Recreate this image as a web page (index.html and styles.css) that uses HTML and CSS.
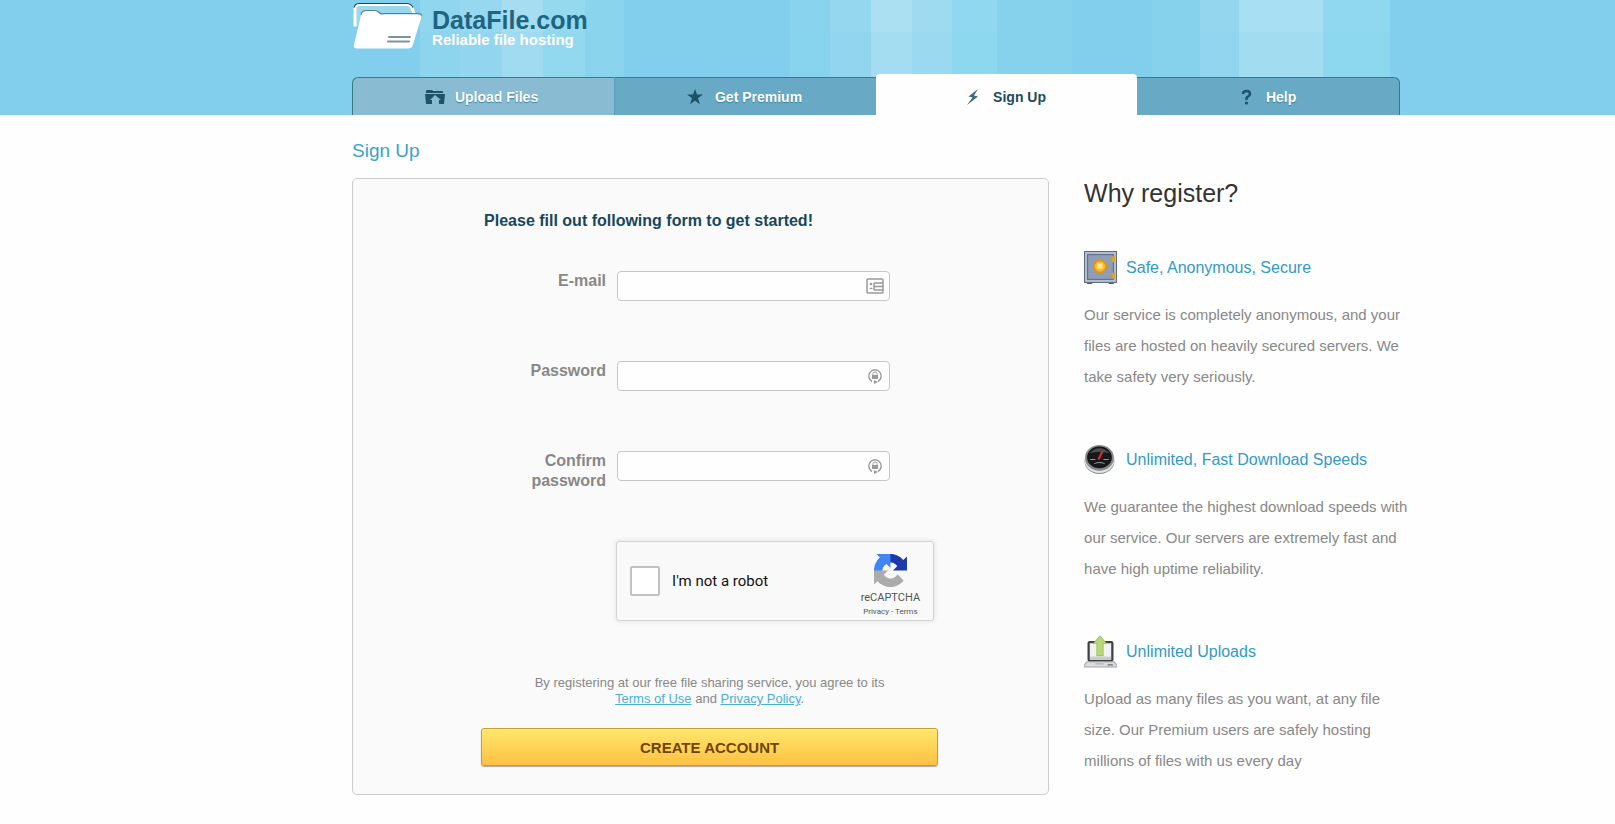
FILE: index.html
```html
<!DOCTYPE html>
<html lang="en">
<head>
<meta charset="utf-8">
<title>DataFile.com - Sign Up</title>
<link rel="stylesheet" href="styles.css">
</head>
<body>
<header class="header">
  <div class="wrap header-inner">
    <a class="logo" href="#">
      <svg class="logo-icon" viewBox="0 0 72 48" aria-hidden="true">
        <path d="M3 26V8q0-4 4-4h48q4 0 5 4l2 5" fill="#9bd8ee" stroke="#fff" stroke-width="3"/>
        <path d="M2 7q1-4 5-4h48q4 0 6 4" fill="none" stroke="#20485a" stroke-width="1.200"/>
        <path d="M9 15q1-5 5-5h9q2 0 4 2t5 2h34q4 0 3 4l-8 26q-1 4-5 4H5q-4 0-3-4z" fill="#fff"/>
        <path d="M9 14q1-4 5-4h9q2 0 4 2t5 1h34q3 0 4 2" fill="none" stroke="#5c7f8d" stroke-width="1.200"/>
        <path d="M37 36.500h21M36 41h21" stroke="#7c949e" stroke-width="2" stroke-linecap="round"/>
      </svg>
      <span class="logo-text">
        <span class="logo-name">DataFile.com</span>
        <span class="logo-tag">Reliable file hosting</span>
      </span>
    </a>
    <nav class="tabs">
      <a class="tab tab-first" href="#">
        <svg class="tab-icon" viewBox="0 0 20 16" aria-hidden="true"><path fill="#1c536a" d="M1 2q0-1 1-1h5l1 1h9q1 0 1 1v1H1zM0 5h20l-1 10h-5v-4h2l-6-5-5 5h2v4H1z"/></svg>
        Upload Files</a>
      <a class="tab" href="#">
        <svg class="tab-icon" viewBox="0 0 20 16" aria-hidden="true"><path fill="#1c536a" d="M10 0l2 5.500h6l-5 3.700 2 6L10 11.700l-5 3.500 2-6L2 5.500h6z"/></svg>
        Get Premium</a>
      <a class="tab tab-active" href="#" aria-current="page">
        <svg class="tab-icon" viewBox="0 0 20 16" aria-hidden="true"><path fill="#3d6d7e" d="M15 0L5.500 7.500l4 1L4 16l11-8.500-4-1z"/></svg>
        Sign Up</a>
      <a class="tab tab-last" href="#">
        <svg class="tab-icon" viewBox="0 0 20 16" aria-hidden="true"><path d="M7 5q0-3 3.500-3T14 5q0 1.500-2 2.500T10.500 11" fill="none" stroke="#1c536a" stroke-width="2.500"/><circle cx="10.500" cy="14" r="1.600" fill="#1c536a"/></svg>
        Help</a>
    </nav>
  </div>
</header>
<main class="wrap page">
  <h1 class="page-title">Sign Up</h1>
  <div class="columns">
    <form class="card">
      <h2 class="card-title">Please fill out following form to get started!</h2>
      <div class="field">
        <label for="email">E-mail</label>
        <div class="control">
          <input id="email" type="email">
          <svg class="control-icon" viewBox="0 0 18 16" aria-hidden="true"><g fill="none" stroke="#999" stroke-width="1.500"><rect x="1" y="1" width="16" height="14" rx="1"/><path d="M8 5h9M8 8.500h9M8 12h9M8 5v7"/></g><circle cx="5" cy="6" r="1.300" fill="#999"/><path d="M3 11q2-3 4 0z" fill="#999"/></svg>
        </div>
      </div>
      <div class="field">
        <label for="password">Password</label>
        <div class="control">
          <input id="password" type="password">
          <svg class="control-icon" viewBox="0 0 18 16" aria-hidden="true"><path d="M6 13.500A6.200 6.200 0 1 1 12 13.500" fill="none" stroke="#999" stroke-width="1.500"/><path d="M7 7V5.500q0-1.500 2-1.500t2 1.500V7" fill="none" stroke="#999"/><path d="M6 7h6v4H6zM8 12l4 2-4 2z" fill="#999"/></svg>
        </div>
      </div>
      <div class="field">
        <label for="confirm">Confirm password</label>
        <div class="control">
          <input id="confirm" type="password">
          <svg class="control-icon" viewBox="0 0 18 16" aria-hidden="true"><path d="M6 13.500A6.200 6.200 0 1 1 12 13.500" fill="none" stroke="#999" stroke-width="1.500"/><path d="M7 7V5.500q0-1.500 2-1.500t2 1.500V7" fill="none" stroke="#999"/><path d="M6 7h6v4H6zM8 12l4 2-4 2z" fill="#999"/></svg>
        </div>
      </div>
      <div class="captcha">
        <input class="captcha-box" id="robot" type="checkbox">
        <label class="captcha-label" for="robot">I'm not a robot</label>
        <div class="captcha-brand">
          <svg class="captcha-logo" viewBox="0 0 64 64" aria-hidden="true">
            <path fill="#1c3aa9" d="M64 31.955l-.033-1.370V4.687l-7.160 7.160C50.948 4.674 42.033.093 32.050.093c-10.400 0-19.622 4.960-25.458 12.640l11.736 11.860a15.550 15.550 0 0 1 4.754-5.334c2.050-1.600 4.952-2.906 8.968-2.906.485 0 .860.057 1.135.163 4.976.393 9.288 3.140 11.828 7.124l-8.307 8.307L64 31.953"/>
            <path fill="#4285f4" d="M31.862.094l-1.370.033H4.594l7.160 7.160C4.580 13.147 0 22.060 0 32.046c0 10.400 4.960 19.622 12.640 25.458L24.500 45.768a15.550 15.550 0 0 1-5.334-4.754c-1.600-2.050-2.906-4.952-2.906-8.968 0-.485.057-.860.163-1.135.393-4.976 3.140-9.288 7.124-11.828l8.307 8.307L31.860.095"/>
            <path fill="#ababab" d="M.001 32.045l.033 1.370v25.898l7.160-7.160c5.860 7.173 14.774 11.754 24.760 11.754 10.400 0 19.622-4.960 25.458-12.640l-11.736-11.860a15.550 15.550 0 0 1-4.754 5.334c-2.050 1.600-4.952 2.906-8.968 2.906-.485 0-.860-.057-1.135-.163-4.976-.393-9.288-3.140-11.828-7.124l8.307-8.307c-10.522.040-22.400.066-27.295-.005"/>
          </svg>
          <span class="captcha-name">reCAPTCHA</span>
          <span class="captcha-links"><a href="#">Privacy</a> - <a href="#">Terms</a></span>
        </div>
      </div>
      <p class="legal">By registering at our free file sharing service, you agree to its <br><a href="#">Terms of Use</a> and <a href="#">Privacy Policy</a>.</p>
      <button class="submit" type="submit">CREATE ACCOUNT</button>
    </form>
    <aside class="reasons">
      <h2 class="reasons-title">Why register?</h2>
      <section class="reason">
        <h3 class="reason-title">
          <svg class="reason-icon" viewBox="0 0 32 32" aria-hidden="true">
            <path d="M3 30h5v2H3zM24 30h5v2h-5z" fill="#555e70"/>
            <rect x=".5" y=".5" width="31" height="30" fill="#b4bfd3" stroke="#5f6b80"/>
            <rect x="3.500" y="3.500" width="25" height="24" fill="#8f9db5" stroke="#5a6a88"/>
            <circle cx="15.500" cy="15" r="7" fill="#d9981c"/><circle cx="15.500" cy="15" r="5" fill="#f1bd3a"/><rect x="13" y="12" width="5" height="5" fill="#ffe48a"/>
            <path d="M27 5h3v6h-3zM27 21h3v6h-3z" fill="#d9a32c"/>
          </svg>
          Safe, Anonymous, Secure</h3>
        <p>Our service is completely anonymous, and your files are hosted on heavily secured servers. We take safety very seriously.</p>
      </section>
      <section class="reason">
        <h3 class="reason-title">
          <svg class="reason-icon" viewBox="0 0 32 32" aria-hidden="true">
            <ellipse cx="15" cy="18" rx="14.500" ry="12" fill="#85898b"/>
            <ellipse cx="15" cy="16.500" rx="14.500" ry="12.500" fill="#e2e4e4"/>
            <ellipse cx="15" cy="14.500" rx="14" ry="12.500" fill="#85898b"/>
            <ellipse cx="15" cy="14" rx="12" ry="10.500" fill="#171819"/>
            <path d="M5 10q10-10 20 0-10-3-20 0z" fill="#4c5151"/>
            <path d="M14 16l4-8" stroke="#d92b38" stroke-width="2"/>
            <path d="M6 16h5M19 16h5M10 20q5-2 10 0" fill="none" stroke="#929697"/>
          </svg>
          Unlimited, Fast Download Speeds</h3>
        <p>We guarantee the highest download speeds with our service. Our servers are extremely fast and have high uptime reliability.</p>
      </section>
      <section class="reason">
        <h3 class="reason-title">
          <svg class="reason-icon" viewBox="0 0 32 32" aria-hidden="true">
            <rect x="4.500" y="7" width="23" height="18" rx="1" fill="#f1f1f1" stroke="#3f4245" stroke-width="2.200"/>
            <path d="M6 21h20v3H6z" fill="#c8cbce"/>
            <path d="M3 26h26l3 3v2H0v-2z" fill="#dcdcdc" stroke="#a4a4a4"/><path d="M11 28h8" stroke="#aaa"/><path d="M23 29h5" stroke="#555"/>
            <path d="M15.500 1l6 7h-3v12h-6V8h-3z" fill="#b9d877" stroke="#a3c463"/>
          </svg>
          Unlimited Uploads</h3>
        <p>Upload as many files as you want, at any file size. Our Premium users are safely hosting millions of files with us every day</p>
      </section>
    </aside>
  </div>
</main>
</body>
</html>
```

FILE: styles.css
```css
* { box-sizing: border-box; }

body {
  margin: 0;
  background: #fefefe;
  color: #888;
  font-family: "Liberation Sans", Arial, sans-serif;
}

h1, h2, h3, p { margin: 0; }

.wrap {
  width: calc(100% - 21.8%);
  max-width: 1048px;
  margin-left: 21.8%;
}

.header { background: #81cfec; }

.header-inner {
  display: flex;
  flex-direction: column;
  gap: 25px;
  background:
    linear-gradient(rgba(129, 207, 236, 0) 32px, rgba(129, 207, 236, .16) 32px),
    linear-gradient(90deg,
      transparent 68px, #8fd6ee 68px 108px, #95d8ef 108px 150px,
      #a6ddf1 150px 191px, #95d9ef 191px 233px, #8bd4ee 233px 272px,
      transparent 272px 438px, #89d3ee 438px 478px, #94d7ef 478px 519px,
      #abe0f3 519px 560px, #9fdbf0 560px 600px, #8fd8ef 600px 645px,
      #86d2ed 645px 720px, transparent 720px 800px, #86d2ed 800px 848px,
      #93d6ee 848px 887px, #a9dff3 887px 971px, #8fd8ef 971px 1038px,
      transparent 1038px);
}

.logo {
  display: flex;
  gap: 8px;
  height: 49px;
  color: #1f6480;
  text-decoration: none;
}

.logo-icon { width: 72px; height: 49px; }

.logo-text {
  display: flex;
  flex-direction: column;
  padding-top: 7px;
  font-weight: bold;
}

.logo-name { font-size: 25px; line-height: 26px; }
.logo-tag { color: #fff; font-size: 15px; line-height: 14px; }

.tabs {
  display: grid;
  grid-template-columns: 263fr 261fr 261fr 263fr;
  align-items: end;
}

.tab {
  display: flex;
  align-items: center;
  justify-content: center;
  gap: 10px;
  height: 38px;
  padding-right: 4px;
  border-top: 1px solid #39798f;
  background: #68aac6;
  color: #fff;
  font-size: 14px;
  font-weight: bold;
  text-decoration: none;
  text-shadow: 0 1px 1px #3f7f9a;
}

.tab-icon { width: 20px; height: 16px; }

.tab-first {
  border-left: 1px solid #39798f;
  border-right: 1px solid #5a9db8;
  border-radius: 6px 0 0 0;
  background: #89bcd3;
}

.tab-last {
  border-right: 1px solid #39798f;
  border-radius: 0 6px 0 0;
}

.tab-active {
  height: 41px;
  padding-top: 4px;
  border: 0;
  border-radius: 4px 4px 0 0;
  background: #fefefe;
  color: #1b4b60;
  text-shadow: none;
}

.page { padding: 24px 0; }

.page-title {
  color: #3ba2cc;
  font-size: 19px;
  font-weight: normal;
  line-height: 24px;
}

.columns {
  display: grid;
  grid-template-columns: 697fr 316fr;
  gap: 35px;
  align-items: start;
  padding-top: 15px;
}

.card {
  padding: 32px 110px 28px 128px;
  border: 1px solid #ccc;
  border-radius: 5px;
  background: #fafafa;
}

.card-title {
  padding: 0 0 40px 3px;
  color: #17475c;
  font-size: 16px;
  line-height: 20px;
}

.field {
  display: grid;
  grid-template-columns: 125px 273px;
  gap: 11px;
  min-height: 90px;
  color: #888;
  font-size: 16px;
  font-weight: bold;
  line-height: 20px;
  text-align: right;
}

.field label { justify-self: end; width: 90px; }

.control { position: relative; height: 30px; }

.control input {
  width: 100%;
  height: 30px;
  padding: 4px 32px 4px 8px;
  border: 1px solid #c6c6c6;
  border-radius: 4px;
  background: #fefefe;
  font: inherit;
}

.control-icon {
  position: absolute;
  top: 7px;
  right: 6px;
  width: 18px;
  height: 16px;
}

.captcha {
  display: flex;
  align-items: center;
  width: 318px;
  height: 80px;
  margin-left: 135px;
  padding: 0 13px;
  border: 1px solid #d3d3d3;
  border-radius: 3px;
  background: #f9f9f9;
  box-shadow: 0 0 4px 1px rgba(0, 0, 0, .08);
  color: #111;
  font-family: Roboto, sans-serif;
}

.captcha-box {
  appearance: none;
  width: 30px;
  height: 30px;
  margin: 0;
  border: 2px solid #c1c1c1;
  border-radius: 2px;
  background: #fff;
}

.captcha-label { padding-left: 12px; font-size: 15px; }

.captcha-brand {
  display: flex;
  flex-direction: column;
  align-items: center;
  padding-top: 10px;
  margin-left: auto;
  color: #555;
}

.captcha-logo { width: 33px; height: 33px; }
.captcha-name { padding-top: 4px; font-size: 11px; line-height: 14px; }
.captcha-links { font-size: 8px; line-height: 14px; }
.captcha-links a { color: inherit; text-decoration: none; }

.legal {
  padding: 54px 0 21px;
  font-size: 13px;
  line-height: 16px;
  text-align: center;
}

.legal a { color: #4bb0d6; }

.submit {
  display: block;
  width: 100%;
  height: 38px;
  border: 1px solid #c99a35;
  border-radius: 3px;
  background: linear-gradient(#ffe76c, #ffc143);
  box-shadow: 0 1px 1px #a9a9a9, inset 0 1px 0 #fff0a0;
  color: #6e4500;
  font: bold 15px "Liberation Sans", Arial, sans-serif;
}

.reasons-title {
  margin-bottom: 43px;
  color: #333;
  font-size: 25px;
  font-weight: normal;
  line-height: 30px;
}

.reason + .reason { margin-top: 51px; }

.reason-title {
  display: flex;
  align-items: center;
  gap: 9px;
  color: #3299cc;
  font-size: 16px;
  font-weight: normal;
  line-height: 32px;
}

.reason-icon { width: 33px; height: 33px; }

.reason p {
  margin-right: -12px;
  padding-top: 15px;
  font-size: 15px;
  line-height: 31px;
}
```
